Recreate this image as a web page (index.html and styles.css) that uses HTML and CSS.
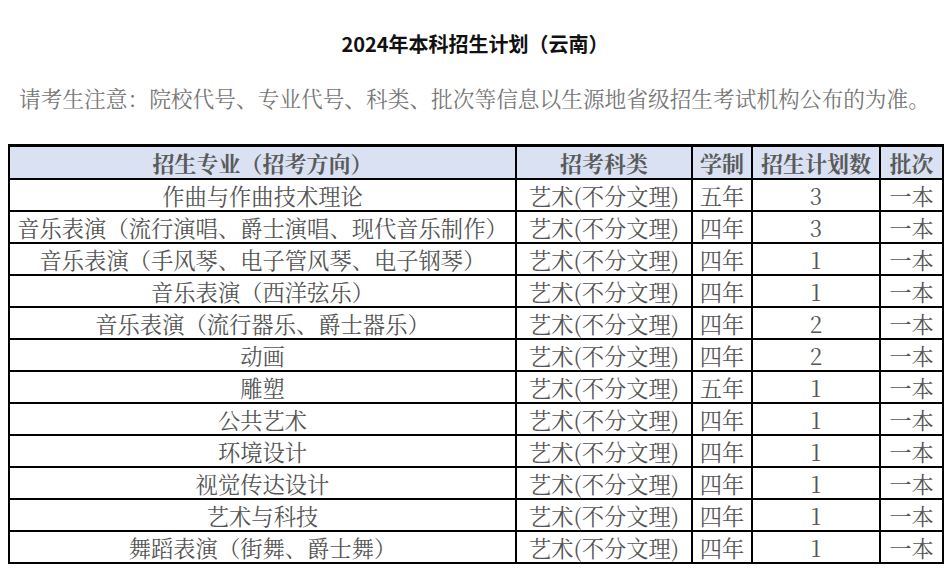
FILE: index.html
```html
<!DOCTYPE html>
<html lang="zh-CN">
<head>
<meta charset="utf-8">
<title>2024年本科招生计划（云南）</title>
<link rel="stylesheet" href="styles.css">
</head>
<body>
<div class="page">
  <h1 class="title">2024年本科招生计划（云南）</h1>
  <p class="notice">请考生注意：院校代号、专业代号、科类、批次等信息以生源地省级招生考试机构公布的为准。</p>
  <table class="plan">
    <colgroup>
      <col class="c1"><col class="c2"><col class="c3"><col class="c4"><col class="c5">
    </colgroup>
    <thead>
      <tr><th>招生专业（招考方向）</th><th>招考科类</th><th>学制</th><th>招生计划数</th><th>批次</th></tr>
    </thead>
    <tbody>
      <tr><td>作曲与作曲技术理论</td><td>艺术(不分文理)</td><td>五年</td><td>3</td><td>一本</td></tr>
      <tr><td>音乐表演（流行演唱、爵士演唱、现代音乐制作）</td><td>艺术(不分文理)</td><td>四年</td><td>3</td><td>一本</td></tr>
      <tr><td>音乐表演（手风琴、电子管风琴、电子钢琴）</td><td>艺术(不分文理)</td><td>四年</td><td>1</td><td>一本</td></tr>
      <tr><td>音乐表演（西洋弦乐）</td><td>艺术(不分文理)</td><td>四年</td><td>1</td><td>一本</td></tr>
      <tr><td>音乐表演（流行器乐、爵士器乐）</td><td>艺术(不分文理)</td><td>四年</td><td>2</td><td>一本</td></tr>
      <tr><td>动画</td><td>艺术(不分文理)</td><td>四年</td><td>2</td><td>一本</td></tr>
      <tr><td>雕塑</td><td>艺术(不分文理)</td><td>五年</td><td>1</td><td>一本</td></tr>
      <tr><td>公共艺术</td><td>艺术(不分文理)</td><td>四年</td><td>1</td><td>一本</td></tr>
      <tr><td>环境设计</td><td>艺术(不分文理)</td><td>四年</td><td>1</td><td>一本</td></tr>
      <tr><td>视觉传达设计</td><td>艺术(不分文理)</td><td>四年</td><td>1</td><td>一本</td></tr>
      <tr><td>艺术与科技</td><td>艺术(不分文理)</td><td>四年</td><td>1</td><td>一本</td></tr>
      <tr><td>舞蹈表演（街舞、爵士舞）</td><td>艺术(不分文理)</td><td>四年</td><td>1</td><td>一本</td></tr>
    </tbody>
  </table>
</div>
</body>
</html>
```
FILE: styles.css
```css
html, body {
  margin: 0;
  padding: 0;
  background: #ffffff;
}
.page {
  padding: 29px 0 0 8px;
  width: 934px;
}
.title {
  margin: 0;
  text-align: center;
  font-family: "Noto Sans CJK SC", "Liberation Sans", sans-serif;
  font-size: 20px;
  font-weight: 700;
  line-height: 30px;
  color: #111111;
}
.notice {
  margin: 24px 0 0 11px;
  font-family: "Noto Serif CJK SC", "Noto Sans CJK SC", serif;
  font-size: 21.7px;
  line-height: 30px;
  color: #777777;
  white-space: nowrap;
}
.plan {
  margin-top: 31px;
  border-collapse: collapse;
  table-layout: fixed;
  width: 934px;
  font-family: "Noto Serif CJK SC", "Noto Sans CJK SC", "Liberation Serif", serif;
  color: #555555;
}
.plan col.c1 { width: 507px; }
.plan col.c2 { width: 176px; }
.plan col.c3 { width: 60px; }
.plan col.c4 { width: 128px; }
.plan col.c5 { width: 63px; }
.plan th, .plan td {
  border: 2px solid #000000;
  padding: 0;
  text-align: center;
  white-space: nowrap;
  overflow: hidden;
}
.plan thead tr { border-top: 3px solid #000000; }
.plan th {
  height: 31px;
  background: #d9e1f2;
  font-size: 22px;
  font-weight: 700;
  color: #5a5a5a;
}
.plan td {
  height: 30px;
  font-size: 22.3px;
  line-height: 30px;
}
```
